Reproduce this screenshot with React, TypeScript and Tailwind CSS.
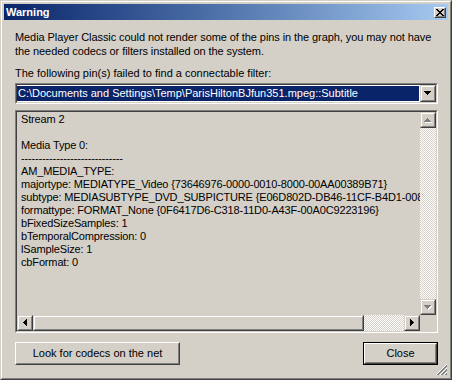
const face = "bg-[#d4d0c8]";

function Raised({ children, className = "" }: { children?: React.ReactNode; className?: string }) {
  return (
    <div
      className={`box-border border border-t-white border-l-white border-b-[#404040] border-r-[#404040] ${face} ${className}`}
    >
      <div className="h-full w-full box-border border border-t-[#d4d0c8] border-l-[#d4d0c8] border-b-[#808080] border-r-[#808080] flex items-center justify-center">
        {children}
      </div>
    </div>
  );
}

function ScrollBtn({ children, className = "" }: { children?: React.ReactNode; className?: string }) {
  return (
    <div
      className={`box-border w-[16px] border border-t-[#d4d0c8] border-l-[#d4d0c8] border-b-[#404040] border-r-[#404040] ${face} ${className}`}
    >
      <div className="h-full w-full box-border border border-t-white border-l-white border-b-[#808080] border-r-[#808080] flex items-center justify-center">
        {children}
      </div>
    </div>
  );
}

// little pixel triangles, drawn as stacked rows
const down = "M0 0h7v1H0zM1 1h5v1H1zM2 2h3v1H2zM3 3h1v1H3z";
const up = "M3 0h1v1H3zM2 1h3v1H2zM1 2h5v1H1zM0 3h7v1H0z";
const left = "M3 0h1v7H3zM2 1h1v5H2zM1 2h1v3H1zM0 3h1v1H0z";
const right = "M0 0h1v7H0zM1 1h1v5H1zM2 2h1v3H2zM3 3h1v1H3z";

function Tri({ d, w, h, disabled }: { d: string; w: number; h: number; disabled?: boolean }) {
  return (
    <svg width={w + 1} height={h + 1} viewBox={`0 0 ${w + 1} ${h + 1}`} shapeRendering="crispEdges">
      {disabled && <path d={d} fill="#ffffff" transform="translate(1 1)" />}
      <path d={d} fill={disabled ? "#808080" : "#000000"} />
    </svg>
  );
}

const checker =
  "bg-[image:repeating-conic-gradient(#ffffff_0%_25%,#d4d0c8_0%_50%)] bg-[length:2px_2px]";

const lines = [
  "Stream 2",
  "",
  "Media Type 0:",
  "-----------------------------",
  "AM_MEDIA_TYPE:",
  "majortype: MEDIATYPE_Video {73646976-0000-0010-8000-00AA00389B71}",
  "subtype: MEDIASUBTYPE_DVD_SUBPICTURE {E06D802D-DB46-11CF-B4D1-00805F6CBBEA}",
  "formattype: FORMAT_None {0F6417D6-C318-11D0-A43F-00A0C9223196}",
  "bFixedSizeSamples: 1",
  "bTemporalCompression: 0",
  "lSampleSize: 1",
  "cbFormat: 0",
];

export default function App() {
  return (
    <div className="w-[452px] h-[380px] font-['Liberation_Sans',Arial,sans-serif] text-[11px] text-black">
      {/* window frame */}
      <div className="h-full box-border border border-t-[#d4d0c8] border-l-[#d4d0c8] border-b-[#404040] border-r-[#404040]">
        <div className="h-full box-border border border-t-white border-l-white border-b-[#808080] border-r-[#808080] bg-[#d4d0c8] p-[2px]">
          <div className="relative h-full flex flex-col">
            {/* title bar */}
            <div className="h-[16px] flex items-center justify-between bg-gradient-to-r from-[#0a246a] to-[#a6caf0] pl-[2px] pr-[2px]">
              <span className="font-bold text-white leading-none">Warning</span>
              <Raised className="w-[12px] h-[11px]">
                <svg width="8" height="7" viewBox="0 0 8 7" shapeRendering="crispEdges">
                  <path
                    d="M0 0h2v1H0zM6 0h2v1H6zM1 1h2v1H1zM5 1h2v1H5zM2 2h4v1H2zM3 3h2v1H3zM2 4h4v1H2zM1 5h2v1H1zM5 5h2v1H5zM0 6h2v1H0zM6 6h2v1H6z"
                    fill="#000"
                  />
                </svg>
              </Raised>
            </div>

            {/* body */}
            <div className="flex-1 flex flex-col pl-[11px] pr-[10px]">
              <p className="mt-[10px] leading-[14px] whitespace-nowrap tracking-[-0.08px]">
                Media Player Classic could not render some of the pins in the graph, you may not have
                <br />
                the needed codecs or filters installed on the system.
              </p>

              <p className="mt-[8px] leading-[14px]">The following pin(s) failed to find a connectable filter:</p>

              {/* combo box */}
              <div className="mt-[3px] h-[21px] box-border border border-t-[#808080] border-l-[#808080] border-b-white border-r-white">
                <div className="h-full box-border border border-t-[#404040] border-l-[#404040] border-b-[#d4d0c8] border-r-[#d4d0c8] bg-white flex">
                  <div className="flex-1 my-[1px] mr-[1px] bg-[#0a246a] text-white leading-[15px] pl-[1px] whitespace-nowrap overflow-hidden">
                    C:\Documents and Settings\Temp\ParisHiltonBJfun351.mpeg::Subtitle
                  </div>
                  <ScrollBtn className="h-full">
                    <Tri d={down} w={7} h={4} />
                  </ScrollBtn>
                </div>
              </div>

              {/* memo */}
              <div className="mt-[6px] h-[223px] box-border border border-t-[#808080] border-l-[#808080] border-b-white border-r-white">
                <div className="h-full box-border border border-t-[#404040] border-l-[#404040] border-b-[#d4d0c8] border-r-[#d4d0c8] flex flex-col">
                  <div className="flex-1 flex min-h-0">
                    <div className="flex-1 overflow-hidden pl-[4px] pt-[1px] leading-[13px] whitespace-pre tracking-[-0.15px]">
                      {lines.map((l, i) => (
                        <div key={i} className="h-[13px]">
                          {l}
                        </div>
                      ))}
                    </div>
                    <div className="w-[16px] flex flex-col">
                      <ScrollBtn className="h-[16px]">
                        <Tri d={up} w={7} h={4} disabled />
                      </ScrollBtn>
                      <div className={`flex-1 ${checker}`} />
                      <ScrollBtn className="h-[16px]">
                        <Tri d={down} w={7} h={4} disabled />
                      </ScrollBtn>
                    </div>
                  </div>
                  <div className="h-[16px] flex">
                    <ScrollBtn className="h-full">
                      <Tri d={left} w={4} h={7} />
                    </ScrollBtn>
                    <ScrollBtn className="h-full w-[331px]" />
                    <div className={`flex-1 ${checker}`} />
                    <ScrollBtn className="h-full">
                      <Tri d={right} w={4} h={7} />
                    </ScrollBtn>
                    <div className="w-[16px]" />
                  </div>
                </div>
              </div>

              {/* buttons */}
              <div className="mt-[9px] flex justify-between">
                <Raised className="w-[165px] h-[23px]">
                  <span className="leading-none">Look for codecs on the net</span>
                </Raised>
                <div className="w-[75px] h-[23px] box-border border border-black">
                  <Raised className="h-full">
                    <span className="leading-none">Close</span>
                  </Raised>
                </div>
              </div>
            </div>

            {/* size grip */}
            <svg className="absolute right-0 bottom-0" width="12" height="12" viewBox="0 0 12 12" shapeRendering="crispEdges">
              <path d="M11 0L0 11M11 4L4 11M11 8L8 11" stroke="#ffffff" strokeWidth="1" />
              <path d="M11 1L1 11M11 2L2 11M11 5L5 11M11 6L6 11M11 9L9 11M11 10L10 11" stroke="#808080" strokeWidth="1" />
            </svg>
          </div>
        </div>
      </div>
    </div>
  );
}
